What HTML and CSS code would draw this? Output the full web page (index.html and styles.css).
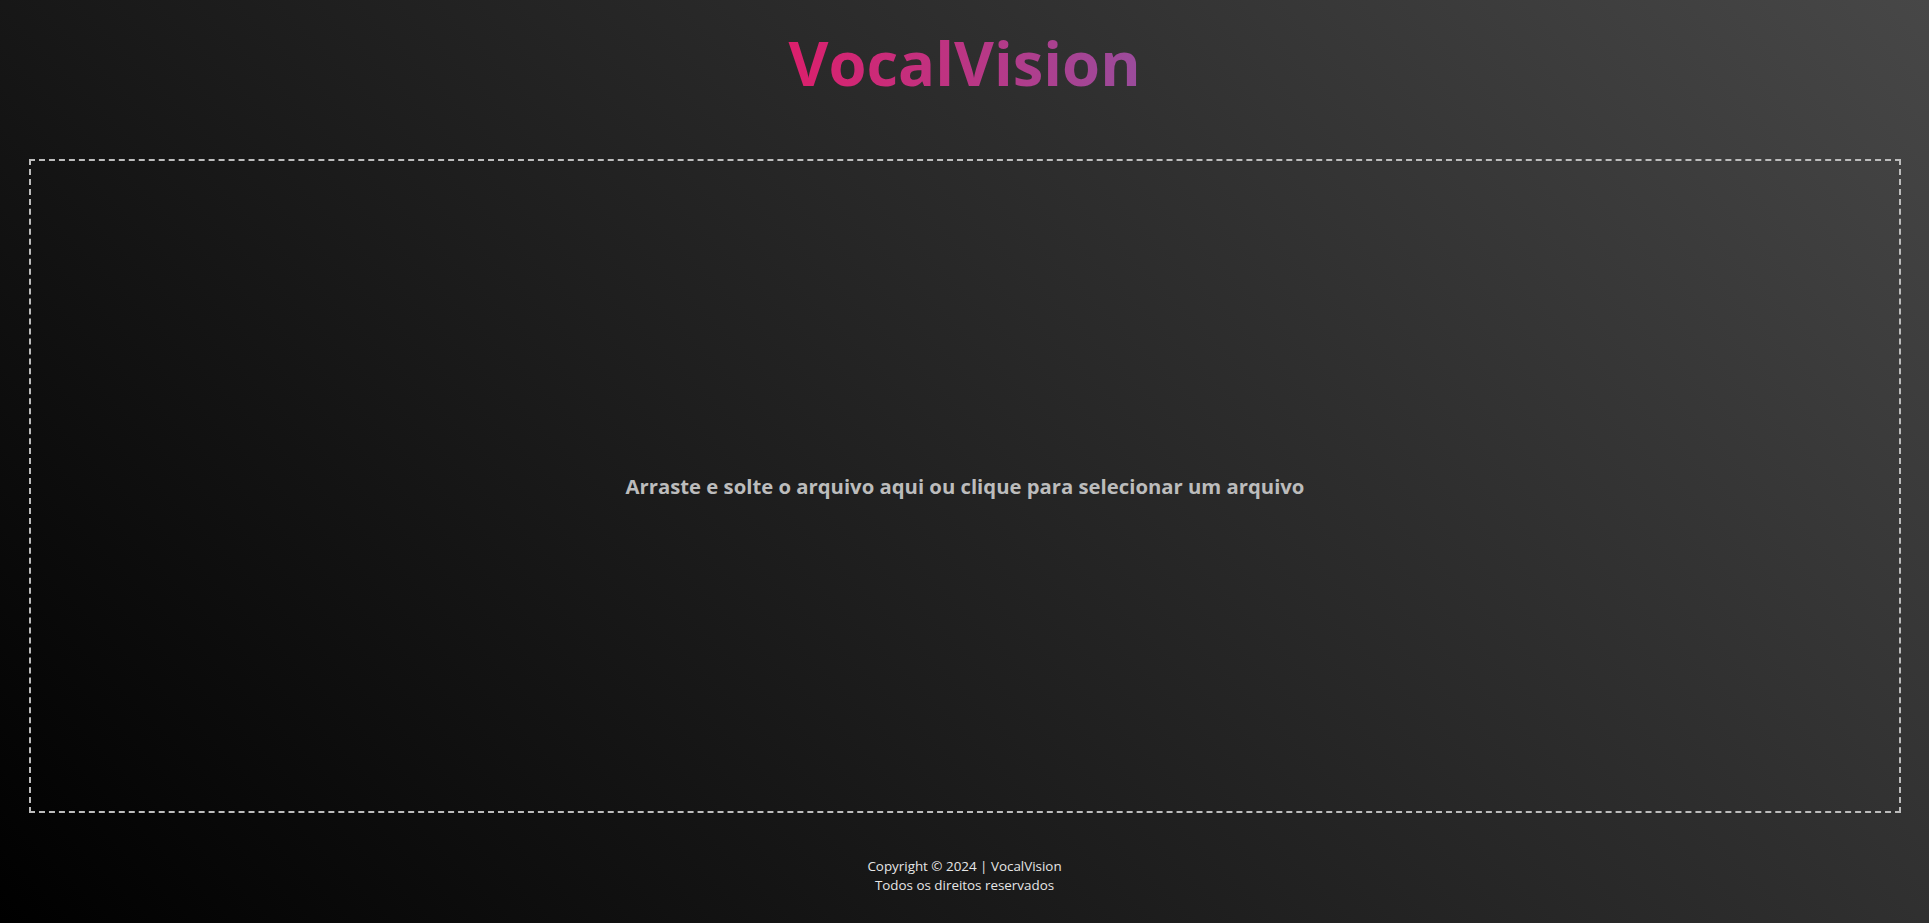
FILE: index.html
```html
<!DOCTYPE html>
<html lang="pt-BR">
<head>
<meta charset="utf-8">
<title>VocalVision</title>
<link rel="stylesheet" href="styles.css">
</head>
<body>
<div class="page">
  <header class="header">
    <h1 class="title">VocalVision</h1>
  </header>
  <main class="main">
    <div class="dropzone">
      <p class="drop-text">Arraste e solte o arquivo aqui ou clique para selecionar um arquivo</p>
    </div>
  </main>
  <footer class="footer">
    <p class="footer-line">Copyright © 2024 | VocalVision</p>
    <p class="footer-line">Todos os direitos reservados</p>
  </footer>
</div>
</body>
</html>
```
FILE: styles.css
```css
html, body {
  margin: 0;
  padding: 0;
  height: 100%;
}
body {
  background: linear-gradient(45deg, #000000, #474747);
  font-family: "Open Sans", "Noto Sans", sans-serif;
  color: #e0e0e0;
  overflow: hidden;
}
.page {
  height: 923px;
  display: flex;
  flex-direction: column;
}
.header {
  height: 159px;
  display: flex;
  justify-content: center;
  padding-top: 22px;
  box-sizing: border-box;
}
.title {
  margin: 0;
  font-size: 61.5px;
  line-height: 80px;
  font-weight: 700;
  letter-spacing: 0;
  background: linear-gradient(90deg, #dc1f6c, #9a4c9c);
  -webkit-background-clip: text;
  background-clip: text;
  color: transparent;
  height: 80px;
}
.main {
  padding: 0 28px 0 29px;
}
.dropzone {
  height: 654px;
  box-sizing: border-box;
  border: 2px dashed #bdbdbd;
  display: flex;
  align-items: center;
  justify-content: center;
}
.drop-text {
  margin: 0;
  font-size: 20.3px;
  font-weight: 700;
  color: #bcbcbc;
}
.footer {
  padding-top: 44px;
  text-align: center;
}
.footer-line {
  margin: 0;
  font-size: 13.4px;
  line-height: 19px;
  color: #e6e6e6;
}
```
